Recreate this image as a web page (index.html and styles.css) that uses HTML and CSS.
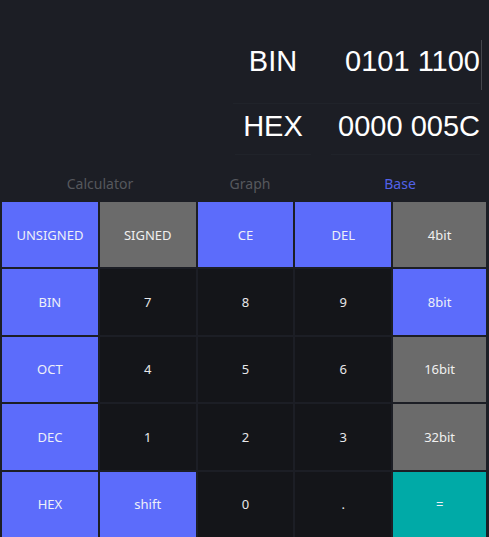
FILE: index.html
```html
<!DOCTYPE html>
<html lang="en">
<head>
<meta charset="utf-8">
<title>Base Calculator</title>
<link rel="stylesheet" href="styles.css">
</head>
<body>
<div class="app">
  <section class="display">
    <div class="row row-bin">
      <div class="label">BIN</div>
      <div class="value active">0101 1100</div>
    </div>
    <div class="row row-hex">
      <div class="label">HEX</div>
      <div class="value">0000 005C</div>
    </div>
  </section>
  <nav class="tabs">
    <div class="tab">Calculator</div>
    <div class="tab">Graph</div>
    <div class="tab tab-active">Base</div>
  </nav>
  <section class="keys">
    <div class="key blue">UNSIGNED</div>
    <div class="key gray">SIGNED</div>
    <div class="key blue">CE</div>
    <div class="key blue">DEL</div>
    <div class="key gray">4bit</div>

    <div class="key blue">BIN</div>
    <div class="key num">7</div>
    <div class="key num">8</div>
    <div class="key num">9</div>
    <div class="key blue">8bit</div>

    <div class="key blue">OCT</div>
    <div class="key num">4</div>
    <div class="key num">5</div>
    <div class="key num">6</div>
    <div class="key gray">16bit</div>

    <div class="key blue">DEC</div>
    <div class="key num">1</div>
    <div class="key num">2</div>
    <div class="key num">3</div>
    <div class="key gray">32bit</div>

    <div class="key blue">HEX</div>
    <div class="key blue">shift</div>
    <div class="key num">0</div>
    <div class="key num">.</div>
    <div class="key teal">=</div>
  </section>
</div>
</body>
</html>
```

FILE: styles.css
```css
html, body {
  margin: 0;
  padding: 0;
}
body {
  width: 489px;
  height: 537px;
  overflow: hidden;
  background: #1c1e25;
  font-family: "Noto Sans", "Open Sans", sans-serif;
}
.app {
  display: flex;
  flex-direction: column;
  height: 537px;
}
.display {
  height: 152px;
  box-sizing: border-box;
  padding-top: 44px;
}
.row {
  display: flex;
  justify-content: flex-end;
  padding-right: 9px;
  font-family: "Liberation Sans", Arial, sans-serif;
  font-size: 29px;
  line-height: 34px;
  color: #ffffff;
}
.row-bin {
  padding-bottom: 26px;
  position: relative;
}
.row-bin::after {
  content: "";
  position: absolute;
  left: 233px;
  right: 9px;
  bottom: 0;
  height: 1px;
  background: #20232a;
}
.row-hex {
  padding-top: 5px;
}
.label {
  width: 76px;
  text-align: center;
}
.value {
  width: 149px;
  margin-left: 20px;
  text-align: right;
}
.row-hex .label,
.row-hex .value {
  padding-bottom: 11px;
  border-bottom: 1px solid #20232a;
}
.value.active {
  position: relative;
}
.value.active::after {
  content: "";
  position: absolute;
  right: -2px;
  top: -4px;
  width: 1px;
  height: 50px;
  background: #44464c;
}
.tabs {
  display: flex;
  height: 50px;
  box-sizing: border-box;
  padding: 12px 14px 0 25px;
  align-items: center;
}
.tab {
  flex: 1;
  text-align: center;
  font-size: 14px;
  color: #56585d;
}
.tab-active {
  color: #5262e8;
}
.keys {
  flex: 1;
  display: grid;
  grid-template-columns: repeat(4, 96fr) 93fr;
  grid-template-rows: repeat(5, 1fr);
  gap: 2px;
  padding: 0 3px 0 2px;
  background: #1c1e25;
}
.key {
  display: flex;
  align-items: center;
  justify-content: center;
  font-size: 13px;
  color: #eef0f8;
}
.blue {
  background: #5c6cfb;
}
.gray {
  background: #6b6b6b;
  color: #f0f0f0;
}
.num {
  background: #141519;
  color: #e8e8ea;
}
.teal {
  background: #00aaa7;
}
```
